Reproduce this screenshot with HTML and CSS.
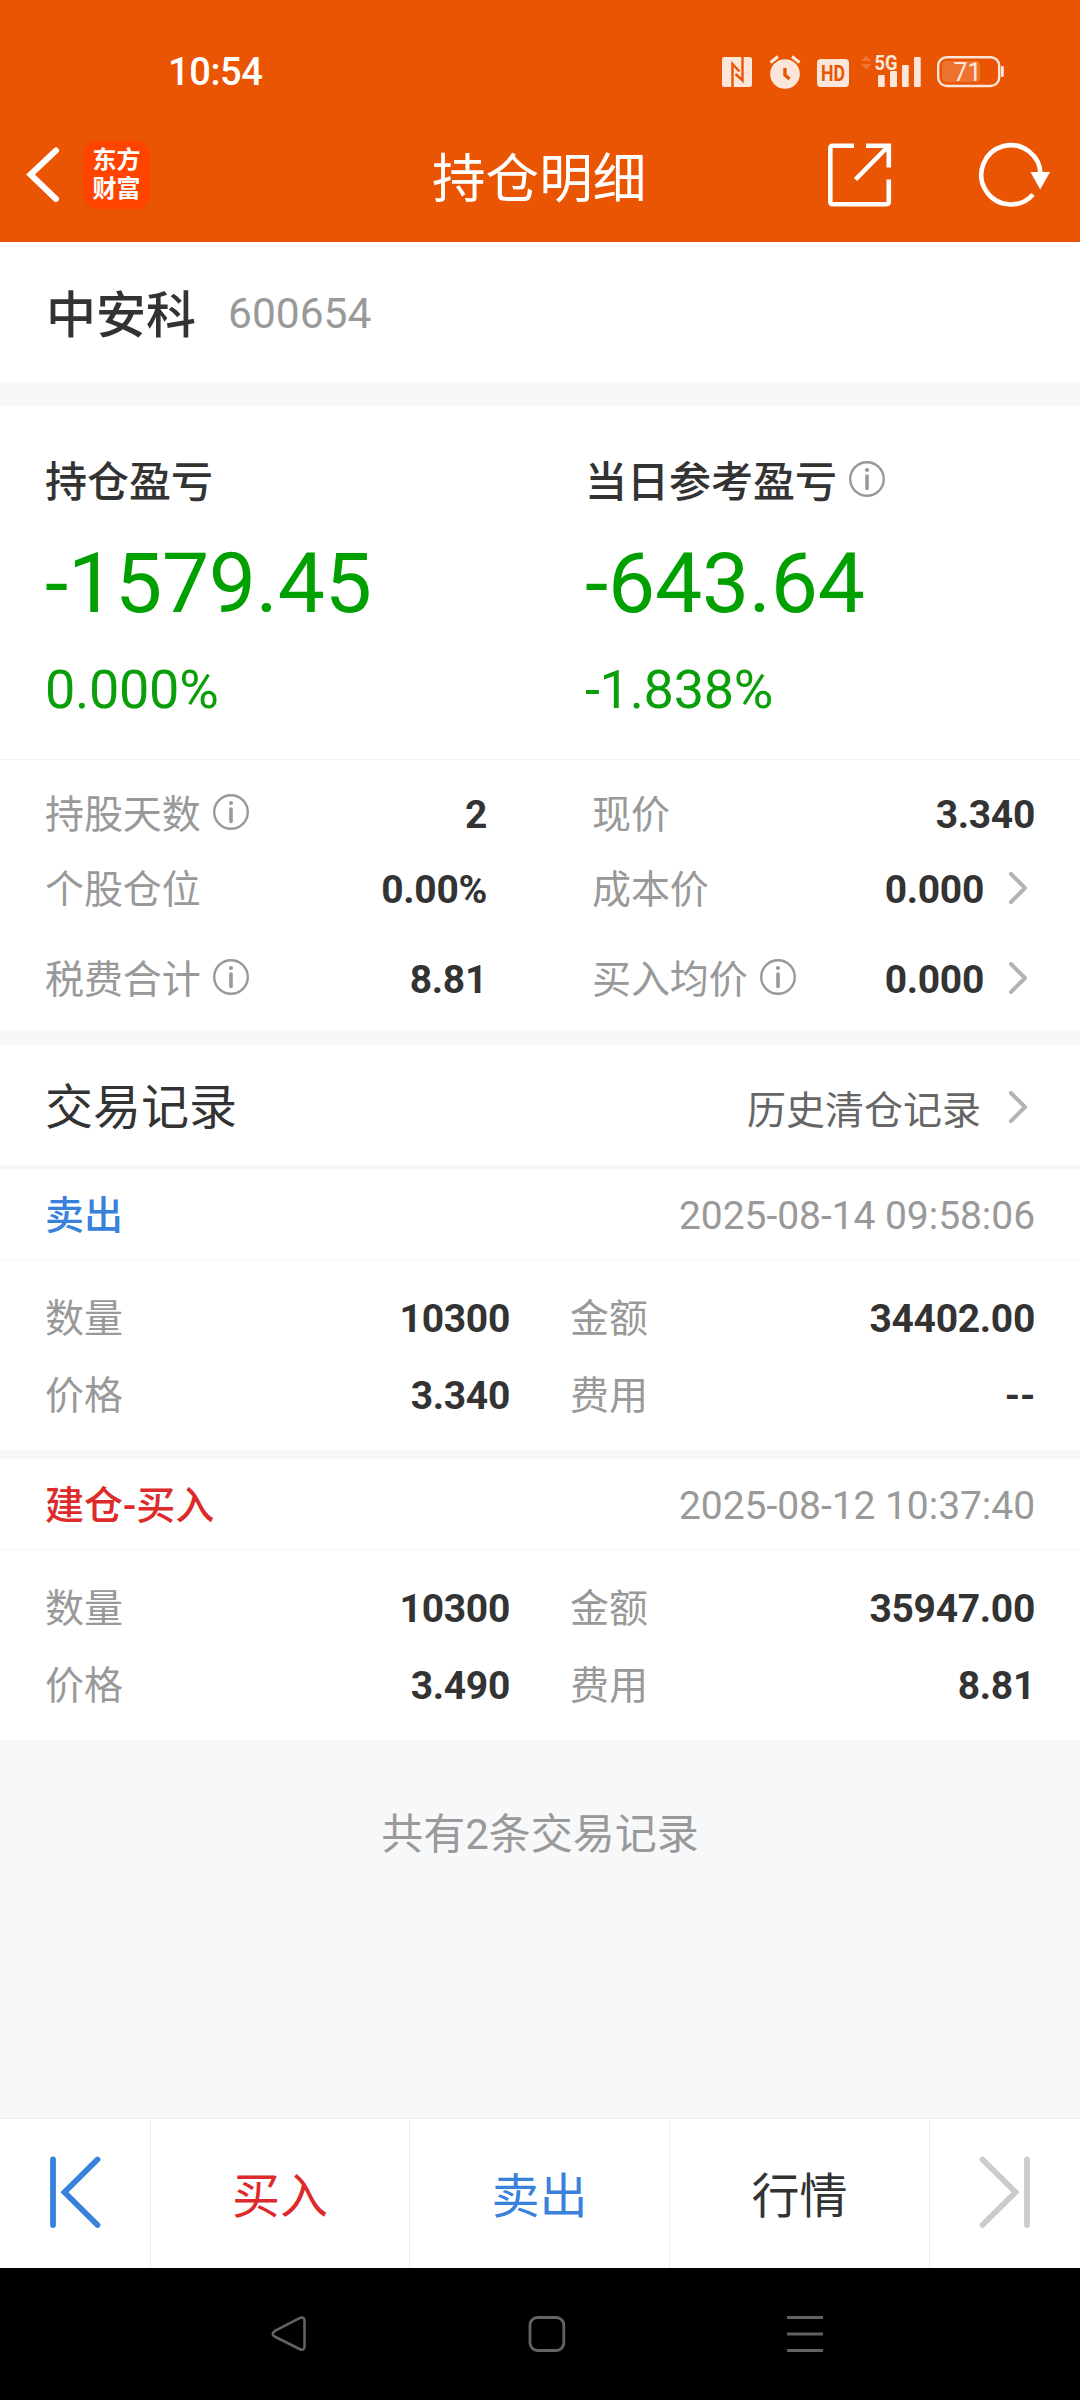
FILE: index.html
```html
<!DOCTYPE html>
<html lang="zh-CN">
<head>
<meta charset="utf-8">
<title>持仓明细</title>
<link rel="stylesheet" href="styles.css">
</head>
<body>
<svg class="defs" width="0" height="0" aria-hidden="true">
  <symbol id="info" viewBox="0 0 36 36">
    <circle cx="18" cy="18" r="16.8" fill="none" stroke="currentColor" stroke-width="2.4"/>
    <circle cx="18" cy="9" r="2.1" fill="currentColor"/>
    <path d="M18 15V27.500" fill="none" stroke="currentColor" stroke-width="3.600" stroke-linecap="round"/>
  </symbol>
  <symbol id="more" viewBox="0 0 18 32">
    <path d="M2 2L16 16L2 30" fill="none" stroke="currentColor" stroke-width="4" stroke-linecap="round" stroke-linejoin="round"/>
  </symbol>
</svg>

<header class="header">
  <div class="status">
    <span class="clock">10:54</span>
    <svg class="status-icons" width="290" height="40" viewBox="718 52 290 40">
      <g fill="#fce6da">
        <rect x="722" y="57" width="30" height="30" rx="2.500"/>
        <path d="M732.500 87.500V64L739.500 71.500M742.500 56.500V80.500L735.500 74" fill="none" stroke="#ea5504" stroke-width="2.400"/>
        <circle cx="785" cy="74" r="14.800"/>
        <path d="M770.500 62.500L778 56.500M799.500 62.500L792 56.500" stroke="#fce6da" stroke-width="3" fill="none"/>
        <path d="M785 68V75L789.500 79" stroke="#ea5504" stroke-width="3.400" fill="none"/>
        <rect x="817" y="59" width="32" height="28" rx="4"/>
        <rect x="878" y="75" width="6.700" height="12" rx="1"/>
        <rect x="890" y="71" width="7" height="16" rx="1"/>
        <rect x="902" y="65" width="6.700" height="22" rx="1"/>
        <rect x="914" y="57" width="6.700" height="30" rx="1"/>
        <rect x="1001" y="66" width="2.800" height="11" rx="1"/>
      </g>
      <path d="M861 61L866.200 55.500L871.400 61ZM861 64L866.200 69.700L871.400 64Z" fill="#ef7430"/>
      <rect x="942" y="61" width="38" height="21" rx="4" fill="#ee722f"/>
      <rect x="938.200" y="57.200" width="61" height="28.800" rx="8.500" fill="none" stroke="#fce6da" stroke-width="2.400"/>
      <text class="i-hd" x="833" y="81" text-anchor="middle" textLength="24" lengthAdjust="spacingAndGlyphs">HD</text>
      <text class="i-5g" x="874.500" y="70" textLength="23" lengthAdjust="spacingAndGlyphs">5G</text>
      <text class="i-bat" x="967.500" y="80.600" text-anchor="middle">71</text>
    </svg>
  </div>
  <div class="nav">
    <svg class="back" width="40" height="60" viewBox="24 145 40 60"><path d="M56 150.500L30.500 174.500L56 199" fill="none" stroke="#fff" stroke-width="6" stroke-linecap="round" stroke-linejoin="miter"/></svg>
    <div class="logo"><span>东方</span><span>财富</span></div>
    <h1 class="title">持仓明细</h1>
    <svg class="share" width="64" height="64" viewBox="828 142.500 64 64"><path d="M854 145.200H833Q830.300 145.200 830.300 148V201Q830.300 203.800 833 203.800H886Q888.800 203.800 888.800 201V179M866 145.200H888.800V167M888 146L855.500 179" fill="none" stroke="#fff" stroke-width="4.600"/></svg>
    <svg class="refresh" width="74" height="66" viewBox="978 141 74 66"><path d="M1040.500 174A29.600 29.600 0 1 0 1033 193.500" fill="none" stroke="#fff" stroke-width="4.600"/><path d="M1030.500 171H1050L1040.200 188.500Z" fill="#fff"/></svg>
  </div>
</header>

<main class="page">
  <section class="stock"><span class="name">中安科</span><span class="code">600654</span></section>

  <section class="summary">
    <div class="sum-col">
      <div class="sum-label">持仓盈亏</div>
      <div class="sum-value">-1579.45</div>
      <div class="sum-pct">0.000%</div>
    </div>
    <div class="sum-col">
      <div class="sum-label">当日参考盈亏<svg class="info"><use href="#info"/></svg></div>
      <div class="sum-value">-643.64</div>
      <div class="sum-pct">-1.838%</div>
    </div>
  </section>

  <section class="details">
    <div class="cell"><span class="label">持股天数</span><svg class="info"><use href="#info"/></svg><b>2</b></div>
    <div class="cell"><span class="label">现价</span><b>3.340</b></div>
    <div class="cell"><span class="label">个股仓位</span><b>0.00%</b></div>
    <div class="cell"><span class="label">成本价</span><b>0.000</b><svg class="more"><use href="#more"/></svg></div>
    <div class="cell last"><span class="label">税费合计</span><svg class="info"><use href="#info"/></svg><b>8.81</b></div>
    <div class="cell last"><span class="label">买入均价</span><svg class="info"><use href="#info"/></svg><b>0.000</b><svg class="more"><use href="#more"/></svg></div>
  </section>

  <section class="records-head">
    <h2>交易记录</h2>
    <a class="history">历史清仓记录</a><svg class="more"><use href="#more"/></svg>
  </section>

  <article class="record">
    <div class="record-head"><span class="side sell">卖出</span><time>2025-08-14 09:58:06</time></div>
    <div class="record-body">
      <div class="cell"><span class="label">数量</span><b>10300</b></div>
      <div class="cell"><span class="label">金额</span><b>34402.00</b></div>
      <div class="cell"><span class="label">价格</span><b>3.340</b></div>
      <div class="cell"><span class="label">费用</span><b>--</b></div>
    </div>
  </article>
  <article class="record">
    <div class="record-head"><span class="side buy">建仓-买入</span><time>2025-08-12 10:37:40</time></div>
    <div class="record-body">
      <div class="cell"><span class="label">数量</span><b>10300</b></div>
      <div class="cell"><span class="label">金额</span><b>35947.00</b></div>
      <div class="cell"><span class="label">价格</span><b>3.490</b></div>
      <div class="cell"><span class="label">费用</span><b>8.81</b></div>
    </div>
  </article>
  <p class="total">共有2条交易记录</p>
</main>

<footer class="actions">
  <div class="action"><svg width="56" height="76" viewBox="47 2153.500 56 76"><path d="M53 2159V2224.500M97.500 2159L64.500 2191.700L97.500 2224.500" fill="none" stroke="#3882dc" stroke-width="5.800" stroke-linecap="round"/></svg></div>
  <div class="action buy">买入</div>
  <div class="action sell">卖出</div>
  <div class="action">行情</div>
  <div class="action"><svg width="56" height="76" viewBox="977 2153.500 56 76"><path d="M1027 2159V2224.500M982.500 2159L1015.500 2191.700L982.500 2224.500" fill="none" stroke="#ccc" stroke-width="5.800" stroke-linecap="round"/></svg></div>
</footer>

<div class="sysbar">
  <svg width="38" height="40" viewBox="270 2314 38 40"><path d="M274.500 2331.200L299.500 2318.200Q304.500 2316 304.500 2321V2346Q304.500 2351.500 299.500 2349L274.500 2336.500Q271 2334 274.500 2331.200Z" fill="none" stroke="#636363" stroke-width="2.600" stroke-linejoin="round"/></svg>
  <svg width="38" height="40" viewBox="528 2314 38 40"><rect x="530" y="2317.500" width="33.800" height="33" rx="7.500" fill="none" stroke="#636363" stroke-width="2.800"/></svg>
  <svg width="38" height="40" viewBox="786 2314 38 40"><path d="M787 2317.600H823M787 2334H823M787 2350.400H823" fill="none" stroke="#636363" stroke-width="3"/></svg>
</div>
</body>
</html>
```

FILE: styles.css
```css
* { box-sizing: border-box; margin: 0; padding: 0; }
body {
  width: 1080px;
  height: 2400px;
  display: flex;
  flex-direction: column;
  overflow: hidden;
  background: #f7f8fa;
  color: #333;
  font-family: Roboto, "Noto Sans CJK SC", sans-serif;
  font-size: 39px;
  line-height: 60px;
}
svg { display: block; flex: none; }
.defs { position: absolute; }

.header { height: 242px; background: #ea5504; color: #fff; }
.status { height: 108px; padding: 52px 72px 0 168px; display: flex; justify-content: space-between; }
.clock { font-size: 38px; font-weight: 500; line-height: 40px; letter-spacing: -0.4px; }
.i-hd { font: 700 22px Roboto, sans-serif; fill: #ea5504; }
.i-5g { font: 700 21px Roboto, sans-serif; fill: #fce6da; }
.i-bat { font: 400 25px Roboto, sans-serif; fill: #fce6da; }
.nav { height: 134px; padding: 0 28px 0 24px; display: flex; align-items: center; }
.logo {
  width: 67px;
  height: 68px;
  margin-left: 19px;
  padding: 5px 0;
  display: flex;
  flex-direction: column;
  align-items: center;
  justify-content: center;
  border-radius: 15px;
  background: #ff4400;
  font-size: 24px;
  font-weight: 700;
  line-height: 29px;
}
.title { width: 216px; margin: 10px 0 0 282px; font-size: 53.6px; font-weight: 400; white-space: nowrap; }
.share { margin-left: 180px; }
.refresh { margin-left: auto; }

.page { flex: 1; }
.stock { height: 140px; padding: 0 46px; display: flex; align-items: center; background: #fff; }
.name { font-size: 50px; font-weight: 500; padding-top: 7px; }
.code { margin-left: 32px; padding-top: 3px; font-size: 42.5px; color: #999; }

.summary {
  height: 354px;
  margin-top: 24px;
  padding: 47px 0 0 45px;
  display: grid;
  grid-template-columns: 540px 1fr;
  background: #fff;
  border-bottom: 1px solid #f5f5f5;
}
.sum-label { display: flex; align-items: center; font-size: 42px; font-weight: 500; }
.sum-label .info { margin: -8px 0 0 12px; }
.sum-value { margin-top: 21px; font-size: 84px; line-height: 100px; letter-spacing: -0.25px; color: #00a000; }
.sum-pct { margin-top: 26px; font-size: 54px; letter-spacing: -0.3px; color: #0a9f0a; }
.info { width: 36px; height: 36px; color: #999; }
.more { width: 18px; height: 32px; margin: -5px 8px 0 25px; color: #b3b3b3; }

.cell { display: flex; align-items: center; }
.cell .info { margin: -6px 0 0 12px; }
.cell b { margin-left: auto; font-weight: 700; letter-spacing: -0.3px; }
.label { color: #999; letter-spacing: -0.1px; }
.details {
  height: 270px;
  padding: 25px 45px 0;
  display: grid;
  grid-template-columns: 442px 443px;
  grid-auto-rows: 60px;
  column-gap: 105px;
  row-gap: 15px;
  align-content: start;
  background: #fff;
}
.details .last { margin: 15px 0 -15px; }

.records-head {
  height: 120px;
  margin-top: 15px;
  padding: 5px 45px 0;
  display: flex;
  align-items: center;
  background: #fff;
}
.records-head h2 { font-size: 48px; font-weight: 400; }
.history { margin: 6px 0 0 auto; color: #666; }
.records-head .more { margin-left: 28px; margin-top: -2px; }

.record { margin-top: 4px; background: #fff; }
.record + .record { margin-top: 9px; }
.record-head {
  height: 91px;
  padding: 3px 45px 0;
  display: flex;
  justify-content: space-between;
  align-items: center;
  border-bottom: 1px solid #f5f6f8;
}
.side { padding-top: 1px; font-weight: 500; }
.record-head time { color: #999; letter-spacing: -0.05px; }
.record-body {
  height: 190px;
  padding: 29px 45px 0;
  display: grid;
  grid-template-columns: 465px 465px;
  grid-auto-rows: 60px;
  column-gap: 60px;
  row-gap: 17px;
}
.sell { color: #3882dc; }
.buy { color: #dd2b2b; }
.total { padding-top: 65px; text-align: center; font-size: 42px; color: #999; }

.actions {
  height: 150px;
  display: grid;
  grid-template-columns: 151px 259px 260px 260px 150px;
  background: #fff;
  border-top: 1px solid #eee;
  font-size: 48px;
}
.action { display: flex; align-items: center; justify-content: center; padding-top: 6px; border-right: 1px solid #eee; }
.action:first-child, .action:last-child { padding: 0 0 4px; }
.action:last-child { border-right: 0; }
.sysbar { height: 132px; padding: 0 256px 0 270px; display: flex; align-items: center; justify-content: space-between; background: #000; }
```
